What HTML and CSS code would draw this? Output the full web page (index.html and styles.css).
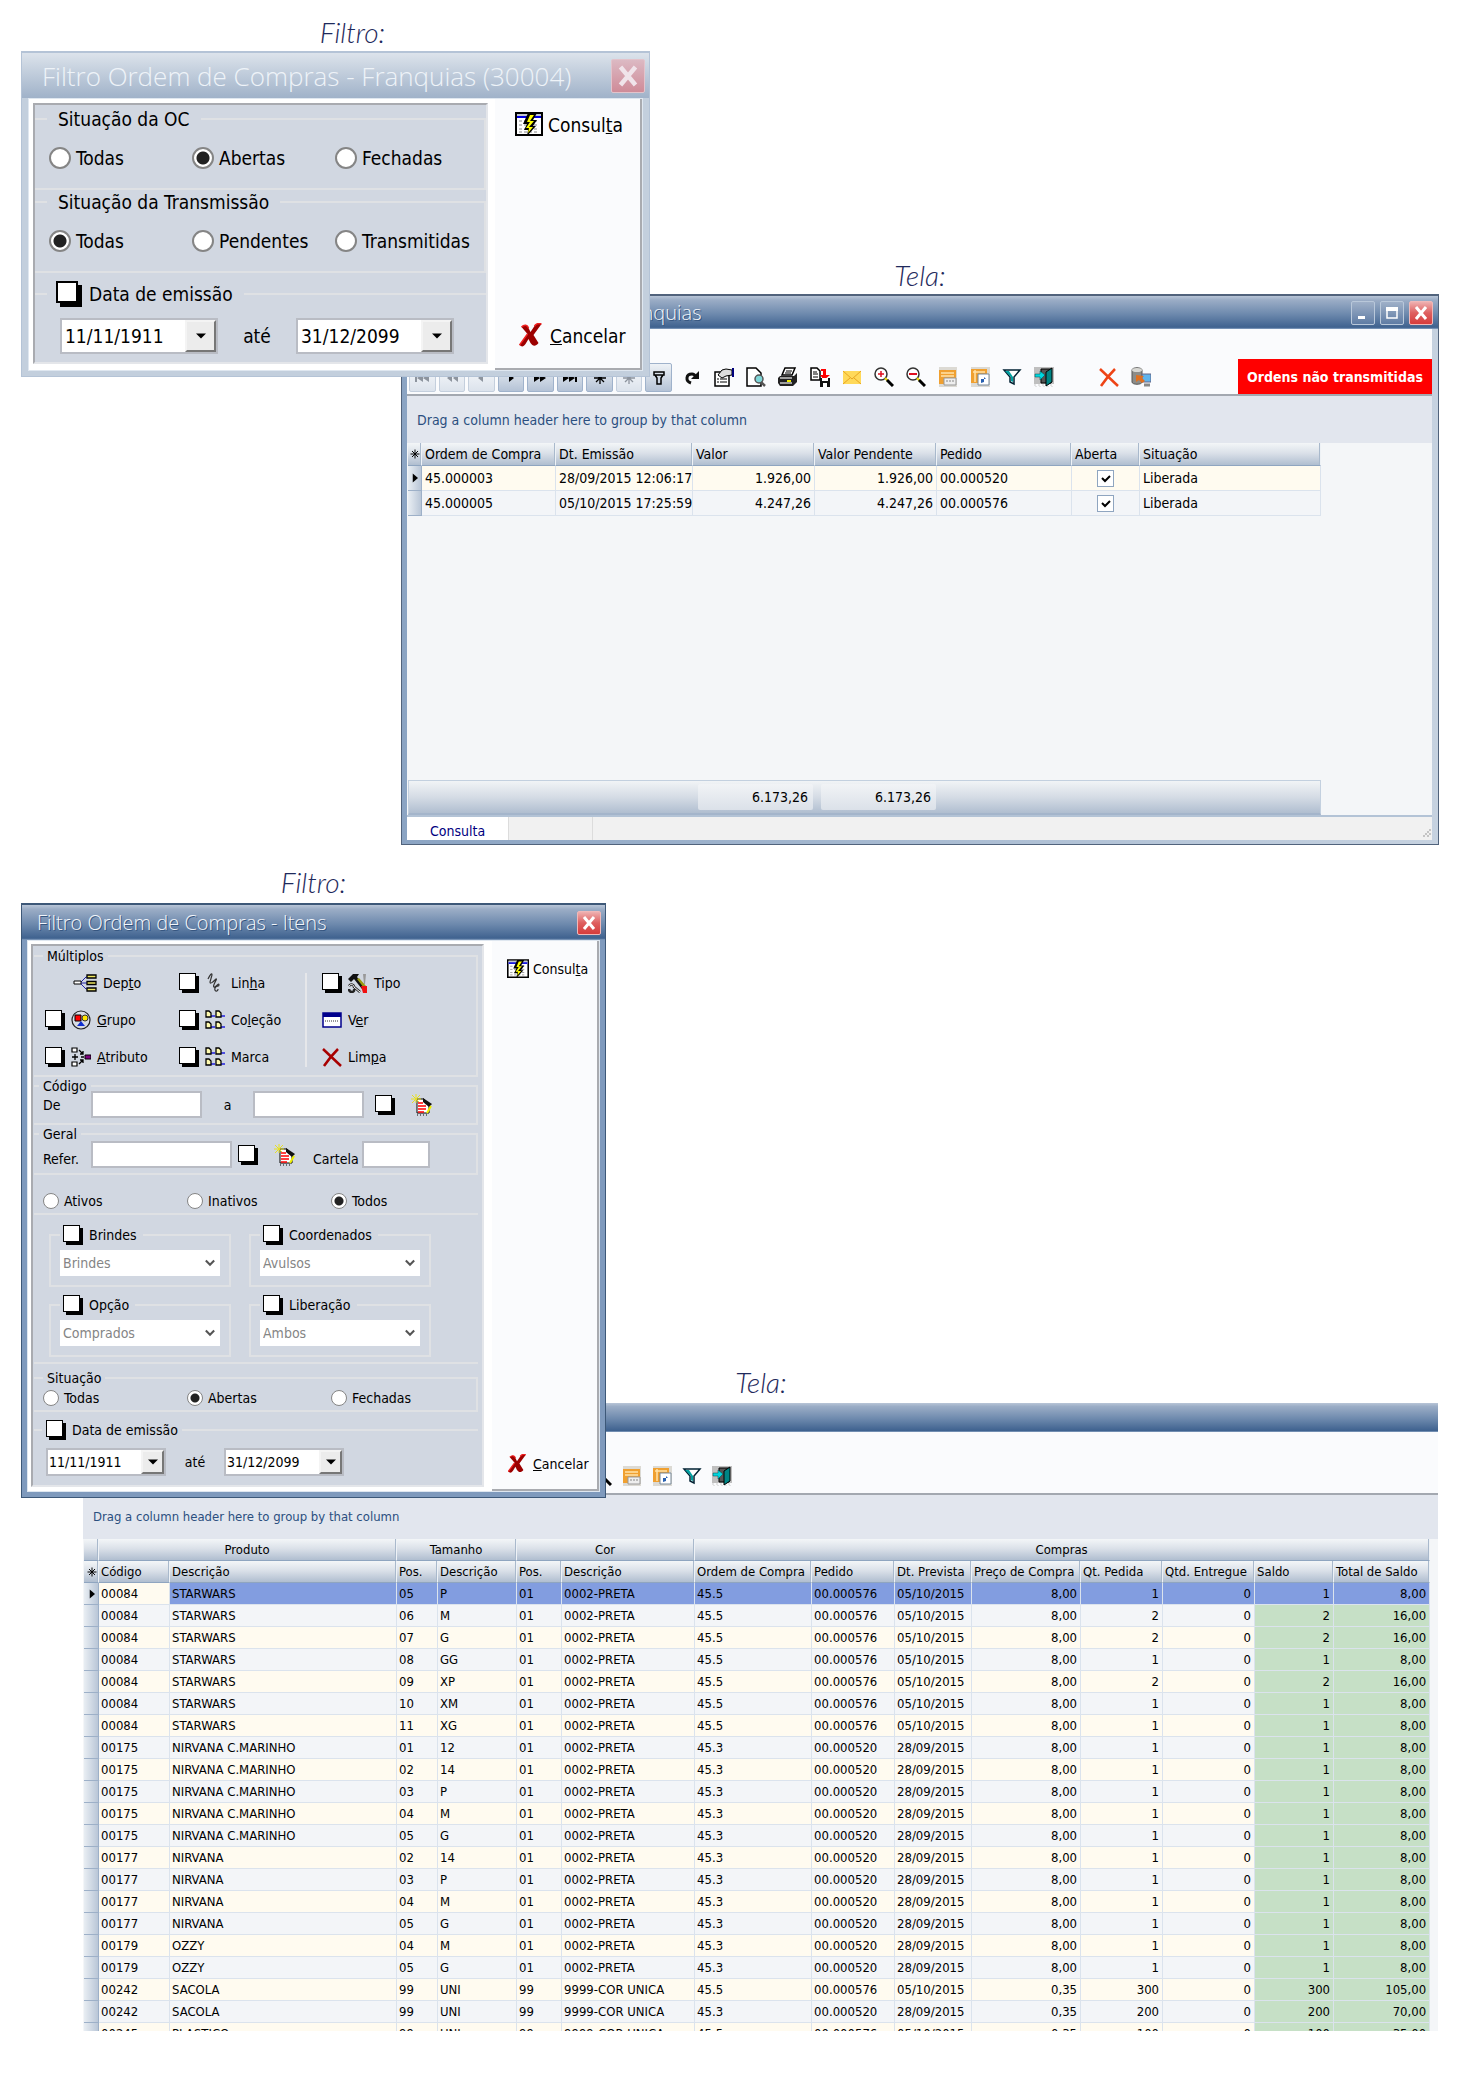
FILE: index.html
```html
<!DOCTYPE html>
<html lang="pt-BR">
<head>
<meta charset="utf-8">
<meta name="viewport" content="width=device-width, initial-scale=1">
<title>Ordem de Compras</title>
<link rel="stylesheet" href="styles.css">
</head>
<body>
<svg class="sprite" aria-hidden="true">
  <symbol id="i-flash" viewBox="0 0 28 25">
    <path d="M1 1h26v22H1z" fill="#fff" stroke="#000" stroke-width="2"/>
    <path d="M2 2h24v4H2z" fill="#c3c7cf"/><path d="M2 4h24v2H2z" fill="#0000e0"/>
    <path d="M4 9h20M4 13h20M4 17h20M4 20h20" stroke="#888" stroke-dasharray="3 2"/>
    <path d="M13 1h9l-4 7h4l-4 6h3l-9 10 1-6H9l3-6H8z" fill="#000"/>
    <path d="M15 3h4l-4 6h4l-5 6h4l-5 6 1-5h-3l4-6h-3z" fill="#ff0"/>
  </symbol>
  <symbol id="i-cancel" viewBox="0 0 22 25">
    <path d="M2 4c3-3 6-2 7 1l2 4 4-6c2-3 4-3 7-2l-8 11 5 8c-3 4-6 3-8 0l-2-4-3 5c-2 3-4 3-6 1l8-11z" fill="#9c0000"/>
    <path d="M15 3c2-3 4-3 7-2M2 4c3-3 6-2 7 1M0 22l8-11" fill="none" stroke="#f02020" stroke-width="1.500"/>
  </symbol>
  <symbol id="i-close" viewBox="0 0 16 16"><path d="M3 2l10 12M13 2L3 14" stroke="currentColor" stroke-width="3"/></symbol>
  <symbol id="i-min" viewBox="0 0 16 16"><path d="M3 11h7v3H3z" fill="#fff"/></symbol>
  <symbol id="i-max" viewBox="0 0 16 16"><path d="M3 3h10v10H3z" fill="none" stroke="#fff" stroke-width="1.500"/><path d="M2 2h12v4H2z" fill="#fff"/></symbol>
  <symbol id="i-first" viewBox="0 0 16 16"><path d="M1 4v8h2V4zM9 4v8L3 8zM15 4v8L9 8z" fill="currentColor"/></symbol>
  <symbol id="i-rew" viewBox="0 0 16 16"><path d="M8 4v8L3 8zM14 4v8L9 8z" fill="currentColor"/></symbol>
  <symbol id="i-prev" viewBox="0 0 16 16"><path d="M10 4v8L5 8z" fill="currentColor"/></symbol>
  <symbol id="i-next" viewBox="0 0 16 16"><path d="M6 4v8l5-4z" fill="currentColor"/></symbol>
  <symbol id="i-fwd" viewBox="0 0 16 16"><path d="M2 4v8l6-4zM8 4v8l6-4z" fill="currentColor"/></symbol>
  <symbol id="i-last" viewBox="0 0 16 16"><path d="M1 4v8l6-4zM7 4v8l6-4zM13 4h2v8h-2z" fill="currentColor"/></symbol>
  <symbol id="i-star" viewBox="0 0 16 16"><path d="M8 2v12M2 8h12M4 4l8 8M12 4l-8 8" stroke="currentColor" stroke-width="1.300"/></symbol>
  <symbol id="i-nfilter" viewBox="0 0 16 16"><path d="M3 2h10v3H3zM4 5l2 3v6h4V8l2-3" fill="none" stroke="#000" stroke-width="1.500"/></symbol>
  <symbol id="i-redo" viewBox="0 0 20 20"><path d="M9 16c-6-2-5-9 1-9 2 0 3 1 4 3" fill="none" stroke="#111" stroke-width="3"/><path d="M17 4v8H9z" fill="#111"/></symbol>
  <symbol id="i-props" viewBox="0 0 20 20">
    <path d="M1 5h14v14H1z" fill="#fff" stroke="#000" stroke-width="1.500"/><path d="M3 12h2m1 0h7M3 15h2m1 0h7" stroke="#000"/>
    <path d="M4 8l4-5 4-1 6 1v5l-6 1-4 2z" fill="#ddd" stroke="#000"/><path d="M18 1h2v9h-2z" fill="#00007c"/>
  </symbol>
  <symbol id="i-preview" viewBox="0 0 20 20">
    <path d="M1 1h9l5 5v13H1z" fill="#fff" stroke="#000" stroke-width="1.500"/><circle cx="13" cy="12" r="4" fill="#7fd6d8" stroke="#555" stroke-width="1.500"/>
    <path d="M15 15l4 4" stroke="#555" stroke-width="2.500"/>
  </symbol>
  <symbol id="i-print" viewBox="0 0 20 20">
    <path d="M7 1h10l-3 7H4z" fill="#fff" stroke="#000" stroke-width="1.500"/><path d="M8 4h6M7 6h6" stroke="#000"/>
    <path d="M2 9h14l3-3v9l-4 4H2l-2-3v-5z" fill="#222"/><path d="M2 11h12M2 16h12" stroke="#c9c9c9" stroke-width="1.500"/><path d="M9 13h4v2H9z" fill="#ee0"/>
  </symbol>
  <symbol id="i-export" viewBox="0 0 20 20">
    <path d="M1 1h6l3 3v9H1z" fill="#fff" stroke="#000" stroke-width="1.500"/><path d="M3 5h4M3 7h5M3 10h5" stroke="#000"/><path d="M11 2h5v6h4l-6 5-4-5h3V4h-2z" fill="red"/>
    <path d="M10 11h10v9H10z" fill="#111"/><path d="M12 11h6v3h-6zM13 16h4v4h-4z" fill="#fff"/>
  </symbol>
  <symbol id="i-mail" viewBox="0 0 20 20"><path d="M1 4h18v13H1z" fill="#ffd95a"/><path d="M1 4l9 8 9-8M1 17l7-6m11 6l-7-6" fill="none" stroke="#e8a520"/></symbol>
  <symbol id="i-zin" viewBox="0 0 20 20"><circle cx="7" cy="7" r="6" fill="#fff" stroke="#333" stroke-width="1.500"/><path d="M4 7h6M7 4v6" stroke="#e01020" stroke-width="1.500"/><path d="M11 11l3 3" stroke="#e8d800" stroke-width="2"/><path d="M13 13l6 6" stroke="#000" stroke-width="3"/></symbol>
  <symbol id="i-zout" viewBox="0 0 20 20"><circle cx="7" cy="7" r="6" fill="#fff" stroke="#333" stroke-width="1.500"/><path d="M3 7h8" stroke="#e01020" stroke-width="2"/><path d="M11 11l3 3" stroke="#e8d800" stroke-width="2"/><path d="M13 13l6 6" stroke="#000" stroke-width="3"/></symbol>
  <symbol id="i-grid" viewBox="0 0 20 20"><path d="M1 0h18v20H1z" fill="#dcdad4"/><path d="M1 3h17v14H1z" fill="#f0a030"/><path d="M3 6h13M3 9h13" stroke="#ffe2a8" stroke-width="1.500"/><path d="M6 11h12v7H6z" fill="#eee" stroke="#999"/><path d="M8 14h8" stroke="#888" stroke-dasharray="2 1"/></symbol>
  <symbol id="i-grid2" viewBox="0 0 20 20"><path d="M1 0h19v20H1z" fill="#dcdad4"/><path d="M1 2h16v14H1z" fill="#f0a030"/><path d="M3 5h12M5 3v12" stroke="#ffe2a8" stroke-width="1.500"/><path d="M8 7h11v11H8z" fill="#fff" stroke="#789"/><path d="M11 16v-4h5l-2-2v5z" fill="#2860b0"/></symbol>
  <symbol id="i-funnel" viewBox="0 0 20 20"><path d="M2 3h16l-6 7v7l-4-2v-5z" fill="#fff" stroke="#023" stroke-width="1.500"/><path d="M3 4h4l4 6v5l-2-1v-4z" fill="#00a0a0"/></symbol>
  <symbol id="i-door" viewBox="0 0 20 20"><path d="M0 0h20v17H0z" fill="#bfbfbf"/><path d="M0 18h20M1 20h18" stroke="#ccc" stroke-dasharray="2 2"/><path d="M7 2h10v14H7z" fill="#555" stroke="#000"/><path d="M12 5l6-4v14l-6 4z" fill="#008484" stroke="#000"/><path d="M1 7h5V4l5 4-5 5v-3H1z" fill="#00d8e0" stroke="#044" stroke-width=".5"/></symbol>
  <symbol id="i-x" viewBox="0 0 20 20"><path d="M1 2l18 17M16 2C10 8 6 13 2 19" fill="none" stroke="currentColor" stroke-width="2.500"/></symbol>
  <symbol id="i-db" viewBox="0 0 20 20"><path d="M1 3v12c0 3 10 3 10 0V3c0-3-10-3-10 0z" fill="#8c8c88" stroke="#555"/><ellipse cx="6" cy="3" rx="5" ry="2" fill="#d8d8d4"/><path d="M11 7h9v8h-9z" fill="#5fb4ec" stroke="#668"/><path d="M13 18h6" stroke="#888" stroke-width="3"/><path d="M5 8l8 1-2 2 3 3-3 2-3-3-3 2z" fill="#e07020"/></symbol>
  <symbol id="i-depto" viewBox="0 0 24 20"><path d="M7 10h16M7 10l6-6h3M7 10l6 6h3" fill="none" stroke="#22a"/><path d="M1 8h7v3H1z" fill="#fff" stroke="#000"/><path d="M14 2h9v3h-9zM14 8.500h9v3h-9zM14 15h9v3h-9z" fill="#f0e860" stroke="#000" stroke-width="1.300"/></symbol>
  <symbol id="i-linha" viewBox="0 0 20 20"><path d="M3 6c2-4 4-7 4-4L5 9c0 3 4-1 6-3 2-1-4 7-2 8 1 1 5-5 5-2 0 2-3 0-4 3-1 4 3 4 3 1" fill="none" stroke="#333" stroke-width="1.200"/></symbol>
  <symbol id="i-tipo" viewBox="0 0 20 20"><path d="M0 6l5-5h6l-2 3 8 10-3 2L6 6 3 9z" fill="#111"/><path d="M9 6l7 9 2-2-7-8z" fill="#9a9a10"/><path d="M15 1h3l-1 10h-1z" fill="#999"/><path d="M13 13h6v7h-4z" fill="#f01010"/><path d="M1 13c2-3 5-1 5 1l6 5M1 16c0 4 6 4 5 0" fill="none" stroke="#222" stroke-width="2.500"/><path d="M1 13c2-3 5-1 5 1l6 5" fill="none" stroke="#fff"/></symbol>
  <symbol id="i-grupo" viewBox="0 0 20 20"><circle cx="10" cy="10" r="9" fill="#d8dce4" stroke="#222" stroke-width="1.200"/><path d="M4 5h6v6H4z" fill="red" stroke="#000"/><circle cx="14" cy="8" r="3" fill="#ffe600" stroke="#333"/><path d="M10 11l4 5H6z" fill="#1030d0"/></symbol>
  <symbol id="i-tree" viewBox="0 0 20 20"><path d="M6 6h4M16 6h4M6 17h4M16 17h4" stroke="#22d" stroke-width="1.500"/><g fill="#fffbb0" stroke="#000" stroke-width="1.300"><path d="M1 1h3l2 2v4H1zM11 1h3l2 2v4h-5zM1 12h3l2 2v4H1zM11 12h3l2 2v4h-5z"/></g></symbol>
  <symbol id="i-atrib" viewBox="0 0 20 20"><path d="M1 1h5v4H1zM1 15h5v4H1z" fill="#fff" stroke="#000" stroke-width="1.200"/><path d="M1 10h6M4 7v6M8 3l4 4M8 17l4-4M13 10h-3m2-6v3H9m3 9v-3H9" fill="none" stroke="#000" stroke-width="1.300"/><path d="M14 8h6v4h-6z" fill="#800080" stroke="#000"/></symbol>
  <symbol id="i-ver" viewBox="0 0 20 16"><path d="M1 1h18v14H1z" fill="#fff" stroke="#00008c" stroke-width="1.500"/><path d="M1 1h18v4H1z" fill="#00008c"/><path d="M3 9h14" stroke="#333" stroke-dasharray="1 1"/></symbol>
  <symbol id="i-note" viewBox="0 0 22 22"><path d="M6 5h7l5 5v9H6z" fill="#fff" stroke="#000"/><path d="M12 4l9 6-3 3-6-5z" fill="#111"/><path d="M7 9h5M7 12h8M7 15h8M7 18h6" stroke="red" stroke-width="1.500"/><path d="M16 19l4-7" stroke="#ee0" stroke-width="2"/><path d="M1 1l7 7M5 0v9M0 5h10M9 1L1 9" stroke="#e8e020"/><path d="M6 21h10" stroke="#000" stroke-dasharray="1 2"/></symbol>
  <symbol id="i-ind" viewBox="0 0 16 16"><path d="M5 2v12l7-6z" fill="#000"/></symbol>
</svg>

<main class="page">
  <section class="scene scene-orders">
    <h2 class="caption caption-filter">Filtro:</h2>
    <h2 class="caption caption-screen">Tela:</h2>

    <article class="window">
      <header class="titlebar">
        <span class="title">Ordem de Compras - Franquias</span>
        <button class="winbtn" aria-label="Minimizar"><svg><use href="#i-min"/></svg></button>
        <button class="winbtn" aria-label="Maximizar"><svg><use href="#i-max"/></svg></button>
        <button class="winbtn winbtn-close" aria-label="Fechar"><svg><use href="#i-close"/></svg></button>
      </header>
      <div class="toolbar">
        <div class="navigator">
          <button class="off" aria-label="Primeiro"><svg><use href="#i-first"/></svg></button>
          <button class="off" aria-label="Página anterior"><svg><use href="#i-rew"/></svg></button>
          <button class="off" aria-label="Anterior"><svg><use href="#i-prev"/></svg></button>
          <button aria-label="Próximo"><svg><use href="#i-next"/></svg></button>
          <button aria-label="Próxima página"><svg><use href="#i-fwd"/></svg></button>
          <button aria-label="Último"><svg><use href="#i-last"/></svg></button>
          <button aria-label="Marcar"><svg><use href="#i-star"/></svg></button>
          <button class="off" aria-label="Ir para a marca"><svg><use href="#i-star"/></svg></button>
          <button aria-label="Filtrar"><svg><use href="#i-nfilter"/></svg></button>
        </div>
        <div class="tools">
          <button aria-label="Atualizar"><svg><use href="#i-redo"/></svg></button>
          <button aria-label="Propriedades"><svg><use href="#i-props"/></svg></button>
          <button aria-label="Visualizar"><svg><use href="#i-preview"/></svg></button>
          <button aria-label="Imprimir"><svg><use href="#i-print"/></svg></button>
          <button aria-label="Exportar"><svg><use href="#i-export"/></svg></button>
          <button aria-label="E-mail"><svg><use href="#i-mail"/></svg></button>
          <button aria-label="Ampliar"><svg><use href="#i-zin"/></svg></button>
          <button aria-label="Reduzir"><svg><use href="#i-zout"/></svg></button>
          <button aria-label="Grade"><svg><use href="#i-grid"/></svg></button>
          <button aria-label="Salvar grade"><svg><use href="#i-grid2"/></svg></button>
          <button aria-label="Filtro"><svg><use href="#i-funnel"/></svg></button>
          <button aria-label="Sair"><svg><use href="#i-door"/></svg></button>
          <button class="apart orange" aria-label="Excluir"><svg><use href="#i-x"/></svg></button>
          <button aria-label="Transmitir"><svg><use href="#i-db"/></svg></button>
        </div>
        <strong class="flag">Ordens não transmitidas</strong>
      </div>
      <div class="gridview">
        <p class="groupby">Drag a column header here to group by that column</p>
        <table class="orders">
          <colgroup><col class="w14"><col class="w134"><col class="w137"><col class="w122"><col class="w122"><col class="w135"><col class="w68"><col class="w181"></colgroup>
          <thead><tr><th><svg><use href="#i-star"/></svg></th><th>Ordem de Compra</th><th>Dt. Emissão</th><th>Valor</th><th>Valor Pendente</th><th>Pedido</th><th>Aberta</th><th>Situação</th></tr></thead>
          <tbody>
            <tr><td><svg><use href="#i-ind"/></svg></td><td>45.000003</td><td>28/09/2015 12:06:17</td><td class="num">1.926,00</td><td class="num">1.926,00</td><td>00.000520</td><td><input type="checkbox" class="tick" checked aria-label="Aberta"></td><td>Liberada</td></tr>
            <tr><td></td><td>45.000005</td><td>05/10/2015 17:25:59</td><td class="num">4.247,26</td><td class="num">4.247,26</td><td>00.000576</td><td><input type="checkbox" class="tick" checked aria-label="Aberta"></td><td>Liberada</td></tr>
          </tbody>
        </table>
        <div class="summary"><output>6.173,26</output><output>6.173,26</output></div>
      </div>
      <footer class="statusbar"><span class="tab">Consulta</span><span class="pane"></span><i class="grip"></i></footer>
    </article>

    <form class="dialog dialog-large inactive">
      <header class="titlebar">
        <span class="title">Filtro Ordem de Compras - Franquias (30004)</span>
        <button type="button" class="winbtn winbtn-close" aria-label="Fechar"><svg><use href="#i-close"/></svg></button>
      </header>
      <div class="dialog-body">
        <div class="panel">
          <fieldset class="group">
            <legend>Situação da OC</legend>
            <div class="radios">
              <label><input type="radio" name="oc">Todas</label>
              <label><input type="radio" name="oc" checked>Abertas</label>
              <label><input type="radio" name="oc">Fechadas</label>
            </div>
          </fieldset>
          <fieldset class="group">
            <legend>Situação da Transmissão</legend>
            <div class="radios">
              <label><input type="radio" name="tr" checked>Todas</label>
              <label><input type="radio" name="tr">Pendentes</label>
              <label><input type="radio" name="tr">Transmitidas</label>
            </div>
          </fieldset>
          <fieldset class="group group-date">
            <legend><label><input type="checkbox" class="box">Data de emissão</label></legend>
            <div class="dates">
              <div class="date"><input type="text" value="11/11/1911" aria-label="De"><button type="button" aria-label="Abrir calendário"></button></div>
              <span>até</span>
              <div class="date"><input type="text" value="31/12/2099" aria-label="Até"><button type="button" aria-label="Abrir calendário"></button></div>
            </div>
          </fieldset>
        </div>
        <div class="actions">
          <button type="button"><svg class="flash"><use href="#i-flash"/></svg><span>Consul<u>t</u>a</span></button>
          <button type="button"><svg class="cancel"><use href="#i-cancel"/></svg><span><u>C</u>ancelar</span></button>
        </div>
      </div>
    </form>
  </section>

  <section class="scene scene-items">
    <h2 class="caption caption-filter">Filtro:</h2>
    <h2 class="caption caption-screen">Tela:</h2>

    <article class="window window-cut">
      <header class="titlebar"></header>
      <div class="toolbar">
        <div class="tools">
          <button aria-label="Reduzir"><svg><use href="#i-zout"/></svg></button>
          <button aria-label="Grade"><svg><use href="#i-grid"/></svg></button>
          <button aria-label="Salvar grade"><svg><use href="#i-grid2"/></svg></button>
          <button aria-label="Filtro"><svg><use href="#i-funnel"/></svg></button>
          <button aria-label="Sair"><svg><use href="#i-door"/></svg></button>
        </div>
      </div>
      <div class="gridview">
        <p class="groupby">Drag a column header here to group by that column</p>
        <table class="items">
          <colgroup><col class="w15"><col class="w71"><col class="w227"><col class="w41"><col class="w79"><col class="w45"><col class="w133"><col class="w117"><col class="w83"><col class="w77"><col class="w109"><col class="w82"><col class="w92"><col class="w79"><col class="w96"></colgroup>
          <thead>
            <tr class="bands"><th></th><th colspan="2">Produto</th><th colspan="2">Tamanho</th><th colspan="2">Cor</th><th colspan="8">Compras</th></tr>
            <tr><th><svg><use href="#i-star"/></svg></th><th>Código</th><th>Descrição</th><th>Pos.</th><th>Descrição</th><th>Pos.</th><th>Descrição</th><th>Ordem de Compra</th><th>Pedido</th><th>Dt. Prevista</th><th>Preço de Compra</th><th>Qt. Pedida</th><th>Qtd. Entregue</th><th>Saldo</th><th>Total de Saldo</th></tr>
          </thead>
          <tbody>
            <tr class="selected"><td><svg><use href="#i-ind"/></svg><td>00084<td>STARWARS<td>05<td>P<td>01<td>0002-PRETA<td>45.5<td>00.000576<td>05/10/2015<td>8,00<td>1<td>0<td>1<td>8,00
            <tr><td><td>00084<td>STARWARS<td>06<td>M<td>01<td>0002-PRETA<td>45.5<td>00.000576<td>05/10/2015<td>8,00<td>2<td>0<td>2<td>16,00
            <tr><td><td>00084<td>STARWARS<td>07<td>G<td>01<td>0002-PRETA<td>45.5<td>00.000576<td>05/10/2015<td>8,00<td>2<td>0<td>2<td>16,00
            <tr><td><td>00084<td>STARWARS<td>08<td>GG<td>01<td>0002-PRETA<td>45.5<td>00.000576<td>05/10/2015<td>8,00<td>1<td>0<td>1<td>8,00
            <tr><td><td>00084<td>STARWARS<td>09<td>XP<td>01<td>0002-PRETA<td>45.5<td>00.000576<td>05/10/2015<td>8,00<td>2<td>0<td>2<td>16,00
            <tr><td><td>00084<td>STARWARS<td>10<td>XM<td>01<td>0002-PRETA<td>45.5<td>00.000576<td>05/10/2015<td>8,00<td>1<td>0<td>1<td>8,00
            <tr><td><td>00084<td>STARWARS<td>11<td>XG<td>01<td>0002-PRETA<td>45.5<td>00.000576<td>05/10/2015<td>8,00<td>1<td>0<td>1<td>8,00
            <tr><td><td>00175<td>NIRVANA C.MARINHO<td>01<td>12<td>01<td>0002-PRETA<td>45.3<td>00.000520<td>28/09/2015<td>8,00<td>1<td>0<td>1<td>8,00
            <tr><td><td>00175<td>NIRVANA C.MARINHO<td>02<td>14<td>01<td>0002-PRETA<td>45.3<td>00.000520<td>28/09/2015<td>8,00<td>1<td>0<td>1<td>8,00
            <tr><td><td>00175<td>NIRVANA C.MARINHO<td>03<td>P<td>01<td>0002-PRETA<td>45.3<td>00.000520<td>28/09/2015<td>8,00<td>1<td>0<td>1<td>8,00
            <tr><td><td>00175<td>NIRVANA C.MARINHO<td>04<td>M<td>01<td>0002-PRETA<td>45.3<td>00.000520<td>28/09/2015<td>8,00<td>1<td>0<td>1<td>8,00
            <tr><td><td>00175<td>NIRVANA C.MARINHO<td>05<td>G<td>01<td>0002-PRETA<td>45.3<td>00.000520<td>28/09/2015<td>8,00<td>1<td>0<td>1<td>8,00
            <tr><td><td>00177<td>NIRVANA<td>02<td>14<td>01<td>0002-PRETA<td>45.3<td>00.000520<td>28/09/2015<td>8,00<td>1<td>0<td>1<td>8,00
            <tr><td><td>00177<td>NIRVANA<td>03<td>P<td>01<td>0002-PRETA<td>45.3<td>00.000520<td>28/09/2015<td>8,00<td>1<td>0<td>1<td>8,00
            <tr><td><td>00177<td>NIRVANA<td>04<td>M<td>01<td>0002-PRETA<td>45.3<td>00.000520<td>28/09/2015<td>8,00<td>1<td>0<td>1<td>8,00
            <tr><td><td>00177<td>NIRVANA<td>05<td>G<td>01<td>0002-PRETA<td>45.3<td>00.000520<td>28/09/2015<td>8,00<td>1<td>0<td>1<td>8,00
            <tr><td><td>00179<td>OZZY<td>04<td>M<td>01<td>0002-PRETA<td>45.3<td>00.000520<td>28/09/2015<td>8,00<td>1<td>0<td>1<td>8,00
            <tr><td><td>00179<td>OZZY<td>05<td>G<td>01<td>0002-PRETA<td>45.3<td>00.000520<td>28/09/2015<td>8,00<td>1<td>0<td>1<td>8,00
            <tr><td><td>00242<td>SACOLA<td>99<td>UNI<td>99<td>9999-COR UNICA<td>45.5<td>00.000576<td>05/10/2015<td>0,35<td>300<td>0<td>300<td>105,00
            <tr><td><td>00242<td>SACOLA<td>99<td>UNI<td>99<td>9999-COR UNICA<td>45.3<td>00.000520<td>28/09/2015<td>0,35<td>200<td>0<td>200<td>70,00
            <tr><td><td>00245<td>PLASTICO<td>99<td>UNI<td>99<td>9999-COR UNICA<td>45.5<td>00.000576<td>05/10/2015<td>0,35<td>100<td>0<td>100<td>35,00
          </tbody>
        </table>
      </div>
    </article>

    <form class="dialog">
      <header class="titlebar">
        <span class="title">Filtro Ordem de Compras - Itens</span>
        <button type="button" class="winbtn winbtn-close" aria-label="Fechar"><svg><use href="#i-close"/></svg></button>
      </header>
      <div class="dialog-body">
        <div class="panel">
          <fieldset class="group group-multi">
            <legend>Múltiplos</legend>
            <div class="multi">
              <div class="multi-col">
                <div class="pick pick-indent"><button type="button"><svg class="wide"><use href="#i-depto"/></svg><span>Dep<u>t</u>o</span></button></div>
                <div class="pick"><input type="checkbox" class="box" aria-label="Grupo"><button type="button"><svg><use href="#i-grupo"/></svg><span><u>G</u>rupo</span></button></div>
                <div class="pick"><input type="checkbox" class="box" aria-label="Atributo"><button type="button"><svg><use href="#i-atrib"/></svg><span><u>A</u>tributo</span></button></div>
              </div>
              <div class="multi-col">
                <div class="pick"><input type="checkbox" class="box" aria-label="Linha"><button type="button"><svg><use href="#i-linha"/></svg><span>Lin<u>h</u>a</span></button></div>
                <div class="pick"><input type="checkbox" class="box" aria-label="Coleção"><button type="button"><svg><use href="#i-tree"/></svg><span>Co<u>l</u>eção</span></button></div>
                <div class="pick"><input type="checkbox" class="box" aria-label="Marca"><button type="button"><svg><use href="#i-tree"/></svg><span>Marca</span></button></div>
              </div>
              <div class="multi-col multi-last">
                <div class="pick"><input type="checkbox" class="box" aria-label="Tipo"><button type="button"><svg><use href="#i-tipo"/></svg><span>Tipo</span></button></div>
                <div class="pick"><button type="button"><svg><use href="#i-ver"/></svg><span>V<u>e</u>r</span></button></div>
                <div class="pick darkred"><button type="button"><svg><use href="#i-x"/></svg><span>Lim<u>p</u>a</span></button></div>
              </div>
            </div>
          </fieldset>
          <fieldset class="group group-code">
            <legend>Código</legend>
            <div class="fields fields-high">
              <label class="lead" for="cod-de">De</label><input type="text" id="cod-de" class="f-mid">
              <label class="to" for="cod-a">a</label><input type="text" id="cod-a" class="f-mid">
              <input type="checkbox" class="box" aria-label="Usar lista de códigos">
              <button type="button" class="note" aria-label="Editar lista de códigos"><svg><use href="#i-note"/></svg></button>
            </div>
          </fieldset>
          <fieldset class="group group-code">
            <legend>Geral</legend>
            <div class="fields fields-low">
              <label class="lead" for="refer">Refer.</label><input type="text" id="refer" class="f-long">
              <input type="checkbox" class="box" aria-label="Usar lista de referências">
              <button type="button" class="note" aria-label="Editar lista de referências"><svg><use href="#i-note"/></svg></button>
              <label class="cartela" for="cartela">Cartela</label><input type="text" id="cartela" class="f-short">
            </div>
          </fieldset>
          <div class="radios band">
            <label><input type="radio" name="at">Ativos</label>
            <label><input type="radio" name="at">Inativos</label>
            <label><input type="radio" name="at" checked>Todos</label>
          </div>
          <div class="combos">
            <fieldset><legend><label><input type="checkbox" class="box">Brindes</label></legend><select disabled aria-label="Brindes"><option>Brindes</option></select></fieldset>
            <fieldset><legend><label><input type="checkbox" class="box">Coordenados</label></legend><select disabled aria-label="Coordenados"><option>Avulsos</option></select></fieldset>
            <fieldset><legend><label><input type="checkbox" class="box">Opção</label></legend><select disabled aria-label="Opção"><option>Comprados</option></select></fieldset>
            <fieldset><legend><label><input type="checkbox" class="box">Liberação</label></legend><select disabled aria-label="Liberação"><option>Ambos</option></select></fieldset>
          </div>
          <fieldset class="group group-state">
            <legend>Situação</legend>
            <div class="radios">
              <label><input type="radio" name="si">Todas</label>
              <label><input type="radio" name="si" checked>Abertas</label>
              <label><input type="radio" name="si">Fechadas</label>
            </div>
          </fieldset>
          <fieldset class="group group-date">
            <legend><label><input type="checkbox" class="box">Data de emissão</label></legend>
            <div class="dates">
              <div class="date"><input type="text" value="11/11/1911" aria-label="De"><button type="button" aria-label="Abrir calendário"></button></div>
              <span>até</span>
              <div class="date"><input type="text" value="31/12/2099" aria-label="Até"><button type="button" aria-label="Abrir calendário"></button></div>
            </div>
          </fieldset>
        </div>
        <div class="actions">
          <button type="button"><svg class="flash"><use href="#i-flash"/></svg><span>Consul<u>t</u>a</span></button>
          <button type="button"><svg class="cancel"><use href="#i-cancel"/></svg><span><u>C</u>ancelar</span></button>
        </div>
      </div>
    </form>
  </section>
</main>
</body>
</html>
```
FILE: styles.css
```css
*, *::before, *::after { box-sizing: border-box; }

body {
  margin: 0;
  background: #fff;
  color: #000;
  font: 14px/16px "DejaVu Sans Condensed", "DejaVu Sans", sans-serif;
}

.sprite { display: none; }
svg { display: block; flex: none; width: 20px; height: 20px; }
button, input, select { margin: 0; padding: 0; font: inherit; color: inherit; }
button { border: 0; background: none; }
fieldset, legend, p, h2 { margin: 0; padding: 0; }
fieldset { min-width: 0; border: 2px solid #dfe1e4; }

/* Scenes: a filter dialog lying over the corner of its result window */
.page { padding: 0 20px 53px 21px; }
.scene { display: grid; }
.scene-orders { grid-template-columns: 380px 249px 1fr; grid-template-rows: 51px 243px 83px auto; }
.scene-items { grid-template-columns: 62px 523px 1fr; grid-template-rows: 58px 500px 95px auto; }
.caption {
  align-self: end;
  padding-bottom: 2px;
  text-align: center;
  font: italic 300 28px/34px Lato, sans-serif;
  color: #1f2a5c;
}
.scene-items .caption { padding-bottom: 4px; }
.caption-filter { grid-area: 1 / 1 / 2 / 3; }
.scene-orders .caption-filter { padding-left: 34px; }
.caption-screen { grid-area: 2 / 2 / 3 / 4; }
.window { grid-area: 3 / 2 / 5 / 4; }
.dialog { grid-area: 2 / 1 / 4 / 3; z-index: 1; }

/* Window frames */
.window, .dialog { display: flex; flex-direction: column; }
.window {
  border: 1px solid #51637c;
  border-top-width: 2px;
  background: linear-gradient(90deg, #8ba4c3, #c6d2e0);
  padding: 0 6px 4px 5px;
  min-height: 551px;
}
.titlebar {
  flex: none;
  display: flex;
  align-items: center;
  gap: 5px;
  height: 33px;
  margin: 0 -6px 0 -5px;
  padding: 0 5px 0 16px;
  background: linear-gradient(#b8c5d7, #9badc6 12%, #6d89ad 55%, #3f628f 95%, #8ba4c3);
  color: #f2f6fb;
}
.title { flex: 1; font: 300 20px/24px "Open Sans", sans-serif; white-space: nowrap; text-shadow: 1px 1px 0 #35557f; }
.winbtn {
  display: grid;
  place-items: center;
  width: 24px;
  height: 24px;
  border: 1px solid #b9c8da;
  border-radius: 2px;
  background: linear-gradient(#9fb0c8, #5f7ca4);
  color: #fff;
}
.winbtn svg { width: 16px; height: 16px; }
.winbtn-close { background: linear-gradient(#eeb0b0, #de5f5f 50%, #d63c3c); border-color: #f0b8b8; }

/* Toolbar */
.toolbar {
  flex: none;
  display: flex;
  align-items: flex-end;
  height: 67px;
  border-bottom: 2px solid #a3a8b0;
  background: #fafbfd;
}
.navigator { display: grid; grid-template-columns: repeat(9, 1fr); gap: 3px; width: 263px; padding-bottom: 2px; margin-left: 2px; }
.navigator button {
  display: grid;
  place-items: center;
  height: 29px;
  border: 1px solid #9fb2cb;
  border-radius: 2px;
  background: linear-gradient(#eef2f6, #b5c3d6);
}
.navigator svg { width: 16px; height: 16px; }
.navigator .off { color: #8d949e; border-color: #c4cfdd; background: linear-gradient(#fafbfd, #dce3ec); }
.tools { display: flex; gap: 12px; padding-bottom: 7px; margin-left: 10px; }
.tools .apart { margin-left: 33px; }
.orange { color: #ee4416; }
.flag {
  display: grid;
  place-items: center;
  width: 194px;
  height: 35px;
  margin-left: auto;
  background: #f00;
  color: #fff;
}

/* Data grids */
.gridview { flex: 1 0 auto; display: flex; flex-direction: column; padding-left: 1px; background: #f4f6f8; border-bottom: 2px solid #b3c3d6; }
.groupby { flex: none; height: 47px; margin-left: -1px; padding: 16px 10px; background: #e2e6ee; color: #2b4f7f; }
table { border-collapse: separate; border-spacing: 0; table-layout: fixed; }
th, td { overflow: hidden; padding: 0 3px; white-space: nowrap; text-align: left; font-weight: normal; border-right: 1px solid #dbe3ed; border-bottom: 1px solid #dbe3ed; }
th {
  height: 22px;
  border-right-color: #eef2f6;
  border-bottom-color: #8fa5c0;
  background: linear-gradient(#f3f6f8, #dbe1e9 45%, #b0bed0);
  box-shadow: inset -1px 0 0 #a9b9cc;
}
tbody tr:nth-child(odd) { background: #fffbf0; }
tbody tr:nth-child(even) { background: #f3f5f8; }
td:first-child { background: linear-gradient(90deg, #e9eef3, #b9c6d7); border-color: #9db0c8; }
th:first-child, td:first-child { padding: 0; }
th svg, td svg { width: 12px; height: 12px; margin: 0 auto; }
.num { text-align: right; }
.orders { width: 913px; }
.orders th { height: 23px; }
.orders td { height: 25px; }
.w14 { width: 14px; } .w134 { width: 134px; } .w137 { width: 137px; } .w122 { width: 122px; }
.w135 { width: 135px; } .w68 { width: 68px; } .w181 { width: 181px; }
.tick {
  display: block;
  appearance: none;
  width: 17px;
  height: 17px;
  margin: 0 auto;
  border: 1px solid #8fa5c0;
  background: #fff url("data:image/svg+xml,%3Csvg xmlns='http://www.w3.org/2000/svg' viewBox='0 0 15 15'%3E%3Cpath d='M4 7l3 3 5-5' fill='none' stroke='%23000' stroke-width='2'/%3E%3C/svg%3E");
}
.summary {
  display: flex;
  align-items: center;
  gap: 8px;
  width: 913px;
  height: 35px;
  margin-top: auto;
  padding-left: 289px;
  border: 1px solid #c3d0df;
  border-bottom: 2px solid #a4b5cb;
  background: linear-gradient(#f1f4f6, #d5dce5 50%, #b0bed0);
}
.summary output { width: 115px; padding: 5px; border-radius: 2px; background: linear-gradient(#f1f3f6, #dbe1e9); text-align: right; }
.statusbar { flex: none; display: flex; height: 23px; background: #f1f1f1; }
.tab { width: 101px; padding-top: 6px; background: #fff; color: #000080; text-align: center; }
.pane { width: 85px; border: solid #dcdcdc; border-width: 0 1px; }
.grip { width: 10px; height: 10px; margin: auto 1px 3px auto; background: linear-gradient(135deg, #f1f1f1 50%, transparent 50%), repeating-conic-gradient(#c4c4c4 0 25%, #f1f1f1 0 50%) 0 0 / 4px 4px; }

.window-cut { margin-right: 1px; border: 0; padding: 0; min-height: 0; height: 628px; overflow: hidden; background: #f4f6f8; font-size: 13px; }
.window-cut .titlebar { height: 29px; margin: 0; }
.window-cut .toolbar { height: 63px; }
.window-cut .tools { gap: 10px; margin-left: 509px; }
.window-cut .groupby { height: 44px; padding: 14px 10px; }
.items { width: calc(100% - 8px); }
.items th, .items td { padding-left: 2px; }
.items td { height: 22px; }
.items td:nth-child(n+11) { text-align: right; }
.items td:nth-child(n+14) { background: #c6e0c6; }
.items .selected td:nth-child(n+3) { background: #829de0; }
.items .bands th { text-align: center; }
.w15 { width: 15px; } .w71 { width: 71px; } .w227 { width: 227px; } .w41 { width: 41px; } .w79 { width: 79px; }
.w45 { width: 45px; } .w133 { width: 133px; } .w117 { width: 117px; } .w83 { width: 83px; } .w77 { width: 77px; }
.w109 { width: 109px; } .w82 { width: 82px; } .w92 { width: 92px; } .w96 { width: 96px; }

/* Dialogs */
.dialog { border: 1px solid #3d5878; border-top-width: 2px; padding: 0 5px 5px; background: #7f9abd; }
.dialog .titlebar { height: 35px; margin: 0 -5px; padding: 0 4px 0 15px; }
.dialog-body { flex: 1; display: flex; border: 1px solid #dfe7f0; background: #fff; }
.panel { width: 453px; margin: 3px 0 4px 3px; border: 2px solid #a9abb0; border-right-color: #e4e6ea; border-bottom-color: #e4e6ea; background: #d1d7e1; padding: 3px 4px 0 1px; }
.group { border-left: 0; }
.group > legend { margin-left: 5px; padding: 0 4px; line-height: 14px; }
.group-multi > legend, .group-state > legend { margin-left: 9px; }
.group-date { border-right: 0; border-bottom: 0; }
legend label { display: flex; align-items: center; gap: 6px; }

.box {
  appearance: none;
  flex: none;
  width: 17px;
  height: 17px;
  margin: 0 3px 3px 0;
  border: 1px solid #000;
  background: #fff;
  box-shadow: 3px 3px 0 #000;
}
input[type="radio"] { appearance: none; flex: none; width: 16px; height: 16px; border: 1px solid #858585; border-radius: 50%; background: #fff; }
input[type="radio"]:checked { background: radial-gradient(#222 0 4px, #fff 5px); }
.radios { display: grid; grid-template-columns: repeat(3, 144px); padding-left: 9px; }
.radios label { display: flex; align-items: center; gap: 5px; }
.date { display: flex; width: 120px; height: 28px; border: 2px solid #b9bcc4; background: #fff; }
.date input { flex: 1; min-width: 0; border: 0; padding-left: 1px; background: none; }
.date button { width: 23px; border: 2px solid; border-color: #f4f4f4 #777 #777 #f4f4f4; background: #ececec url("data:image/svg+xml,%3Csvg xmlns='http://www.w3.org/2000/svg' viewBox='0 0 12 6'%3E%3Cpath d='M0 0h12L6 6z'/%3E%3C/svg%3E") center / 10px 6px no-repeat; }
.dates { display: flex; align-items: center; }
.dates span { width: 58px; text-align: center; }

.actions { flex: 1; display: flex; flex-direction: column; justify-content: space-between; align-items: flex-start; margin-left: 8px; padding: 18px 0 15px 15px; border: solid #a9abb0; border-width: 0 2px 2px 0; background: #fafbfd; }
.actions button { display: flex; align-items: center; gap: 4px; }
.actions .flash { width: 22px; height: 20px; }
.actions .cancel { width: 18px; height: 20px; margin: 0 3px 0 1px; }

.multi { display: flex; padding: 1px 0 0 11px; }
.multi-col { width: 134px; }
.multi-col + .multi-col { width: 126px; }
.multi-last { padding-left: 17px; background: linear-gradient(#e6e7ea, #e6e7ea) 0 center / 2px 94px no-repeat; }
.pick { display: flex; align-items: center; height: 37px; gap: 6px; }
.pick button { display: flex; align-items: center; gap: 6px; }
.pick-indent { padding-left: 28px; }
.pick .wide { width: 24px; }
.darkred svg { color: #a80000; }

.group-code { margin-top: 2px; }
.fields { display: flex; align-items: center; height: 32px; padding: 0 0 5px 9px; }
.fields-high { margin-top: -2px; }
.fields input[type="text"] { height: 27px; border: 2px solid #b9bcc4; background: #fff; }
.fields .lead { width: 48px; }
.fields .f-mid { width: 111px; }
.fields .f-long { width: 141px; }
.fields .f-short { width: 68px; }
.fields .to { width: 51px; text-align: center; }
.fields .box { margin-left: 11px; }
.fields-low .box { margin-left: 6px; }
.fields-low label { padding-top: 8px; }
.fields .note { margin-left: 16px; }
.note svg { width: 22px; height: 22px; }
.fields .cartela { margin-left: 17px; width: 49px; }

.band { height: 40px; padding-top: 14px; border-bottom: 2px solid #dfe1e4; }
.combos { display: grid; grid-template-columns: 182px 182px; gap: 8px 18px; padding: 10px 0 5px 15px; border-bottom: 2px solid #dfe1e4; }
.combos fieldset { padding: 5px 9px 9px; }
.combos legend { padding: 0 6px 0 3px; line-height: 20px; }
.combos select {
  display: block;
  appearance: none;
  width: 160px;
  height: 26px;
  border: 0;
  padding-left: 3px;
  border-radius: 0;
  color: #858585;
  opacity: 1;
  background: #fff url("data:image/svg+xml,%3Csvg xmlns='http://www.w3.org/2000/svg' viewBox='0 0 12 8'%3E%3Cpath d='M1 1l5 5 5-5' fill='none' stroke='%23555' stroke-width='2.5'/%3E%3C/svg%3E") right 5px center / 10px 8px no-repeat;
}
.group-state { margin-top: 7px; }
.group-state .radios { height: 25px; }
.panel > .group-date { margin-top: 8px; }
.group-date > legend { margin-left: 8px; line-height: 20px; }
.group-date .dates { padding: 8px 0 6px 12px; }

/* Larger filter dialog */
.dialog-large { font-size: 19px; line-height: 24px; border-color: #b4c3d6; padding: 0 6px 6px; background: #c3cfdd; }
.dialog-large .titlebar { height: 45px; margin: 0 -6px; padding: 0 4px 0 20px; }
.dialog-large .title { font-size: 26px; line-height: 32px; }
.inactive .titlebar { background: linear-gradient(#dce3eb, #a0b2c9); color: #eef3f8; }
.inactive .title { text-shadow: none; }
.inactive .winbtn-close { background: linear-gradient(#dcb9c3, #cf8b98); border-color: #e3c3cb; color: #f0e4ea; }
.dialog-large .winbtn { width: 34px; height: 34px; }
.dialog-large .winbtn svg { width: 24px; height: 24px; }
.dialog-large .panel { width: 455px; margin: 4px 0 6px 4px; padding: 2px 0 0; }
.dialog-large .group { padding-bottom: 18px; }
.dialog-large .group > legend { line-height: 24px; margin-left: 12px; padding: 0 11px; }
.dialog-large .group-date > legend { padding-left: 9px; line-height: 26px; }
.dialog-large legend label { gap: 7px; }
.dialog-large .box { width: 22px; height: 22px; border-width: 2px; box-shadow: 4px 4px 0 #000; margin: 0 4px 4px 0; }
.dialog-large input[type="radio"] { width: 22px; height: 22px; border-width: 2px; }
.dialog-large input[type="radio"]:checked { background: radial-gradient(#222 0 6px, #fff 7px); }
.dialog-large .radios { grid-template-columns: repeat(3, 143px); padding: 15px 0 0 14px; }
.dialog-large .group.group-date { padding-bottom: 8px; }
.dialog-large .dates { padding: 11px 0 0 25px; }
.dialog-large .date { width: 158px; height: 36px; }
.dialog-large .date input { padding-left: 3px; }
.dialog-large .date button { width: 31px; }
.dialog-large .dates span { width: 78px; }
.dialog-large .actions { padding: 13px 0 20px 20px; margin-left: 7px; }
.dialog-large .actions button { gap: 5px; }
.dialog-large .flash { width: 28px; height: 25px; }
.dialog-large .cancel { width: 23px; height: 25px; margin: 0 3px 0 4px; }
```
